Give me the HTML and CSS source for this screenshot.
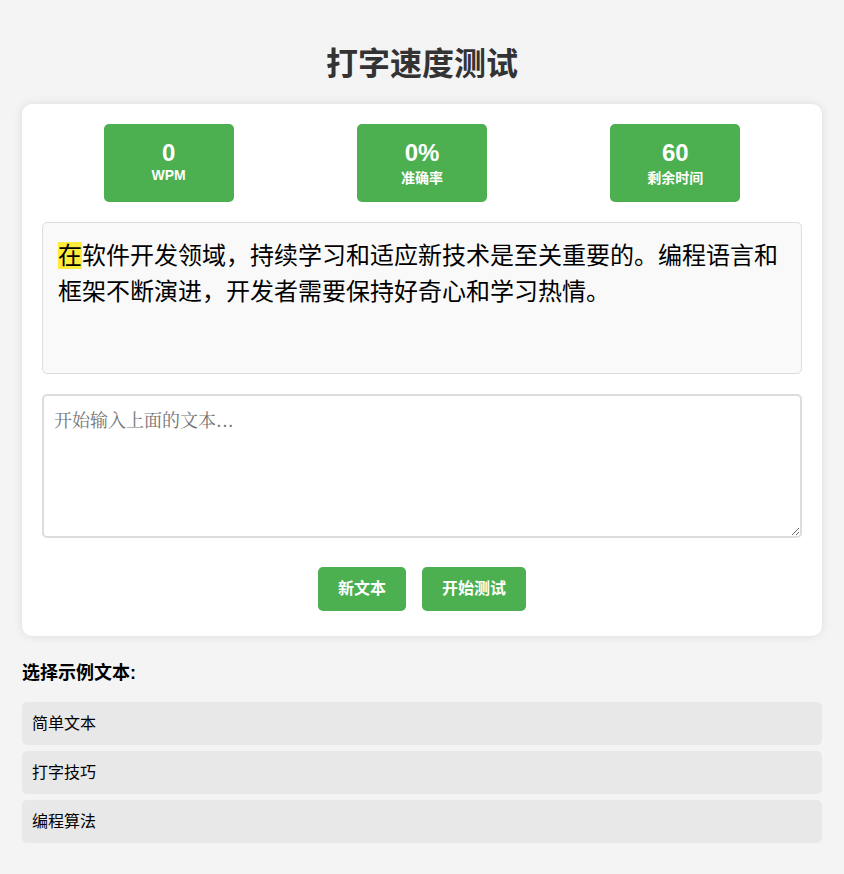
FILE: index.html
```html
<!DOCTYPE html>
<html lang="zh-CN">
<head>
<meta charset="utf-8">
<title>打字速度测试</title>
<link rel="stylesheet" href="styles.css">
</head>
<body>
<div class="page">
  <h1 class="title">打字速度测试</h1>
  <div class="card">
    <div class="stats">
      <div class="stat"><div class="stat-value">0</div><div class="stat-label">WPM</div></div>
      <div class="stat"><div class="stat-value">0%</div><div class="stat-label">准确率</div></div>
      <div class="stat"><div class="stat-value">60</div><div class="stat-label">剩余时间</div></div>
    </div>
    <div class="text-display"><span class="current">在</span>软件开发领域，持续学习和适应新技术是至关重要的。编程语言和框架不断演进，开发者需要保持好奇心和学习热情。</div>
    <textarea class="input" placeholder="开始输入上面的文本..."></textarea>
    <div class="controls">
      <button class="btn">新文本</button>
      <button class="btn">开始测试</button>
    </div>
  </div>
  <div class="samples">
    <h3 class="samples-title">选择示例文本:</h3>
    <div class="sample">简单文本</div>
    <div class="sample">打字技巧</div>
    <div class="sample">编程算法</div>
  </div>
</div>
</body>
</html>
```

FILE: styles.css
```css
html, body {
  margin: 0;
  padding: 0;
}
body {
  background: #f4f4f4;
  font-family: "Liberation Sans", Arial, "Noto Sans CJK SC", sans-serif;
  color: #000;
}
.page {
  max-width: 800px;
  margin: 0 auto;
  padding: 20px 0;
}
.title {
  margin: 18px 0 20px;
  text-align: center;
  font-size: 32px;
  font-weight: bold;
  color: #333;
}
.card {
  background: #fff;
  border-radius: 10px;
  box-shadow: 0 0 10px rgba(0, 0, 0, 0.1);
  padding: 20px;
}
.stats {
  display: flex;
  justify-content: space-around;
  margin-bottom: 20px;
}
.stat {
  background: #4caf50;
  color: #fff;
  border-radius: 5px;
  padding: 15px;
  min-width: 100px;
  text-align: center;
  font-weight: bold;
}
.stat-value {
  font-size: 24px;
}
.stat-label {
  font-size: 14px;
}
.text-display {
  background: #f9f9f9;
  border: 1px solid #ddd;
  border-radius: 5px;
  padding: 15px;
  min-height: 120px;
  font-size: 24px;
  line-height: 1.5;
  margin-bottom: 20px;
}
.current {
  background: #ffeb3b;
}
.input {
  display: block;
  box-sizing: border-box;
  width: 100%;
  height: 144px;
  padding: 10px;
  border: 2px solid #ddd;
  border-radius: 5px;
  font-size: 18px;
  font-family: "Noto Serif CJK SC", serif;
  resize: vertical;
  margin: 0;
}
.controls {
  display: flex;
  justify-content: center;
  gap: 16px;
  margin-top: 24px;
  padding: 5px 0;
}
.btn {
  background: #4caf50;
  color: #fff;
  border: none;
  border-radius: 5px;
  padding: 10px 20px;
  font-size: 16px;
  font-weight: bold;
  font-family: "Liberation Sans", Arial, "Noto Sans CJK SC", sans-serif;
  line-height: 24px;
}
.samples {
  margin-top: 22px;
}
.samples-title {
  margin: 0 0 18px;
  font-size: 18px;
  font-weight: bold;
}
.sample {
  background: #e8e8e8;
  border-radius: 5px;
  padding: 10px;
  font-size: 16px;
  line-height: 23px;
  margin-bottom: 6px;
}
```
